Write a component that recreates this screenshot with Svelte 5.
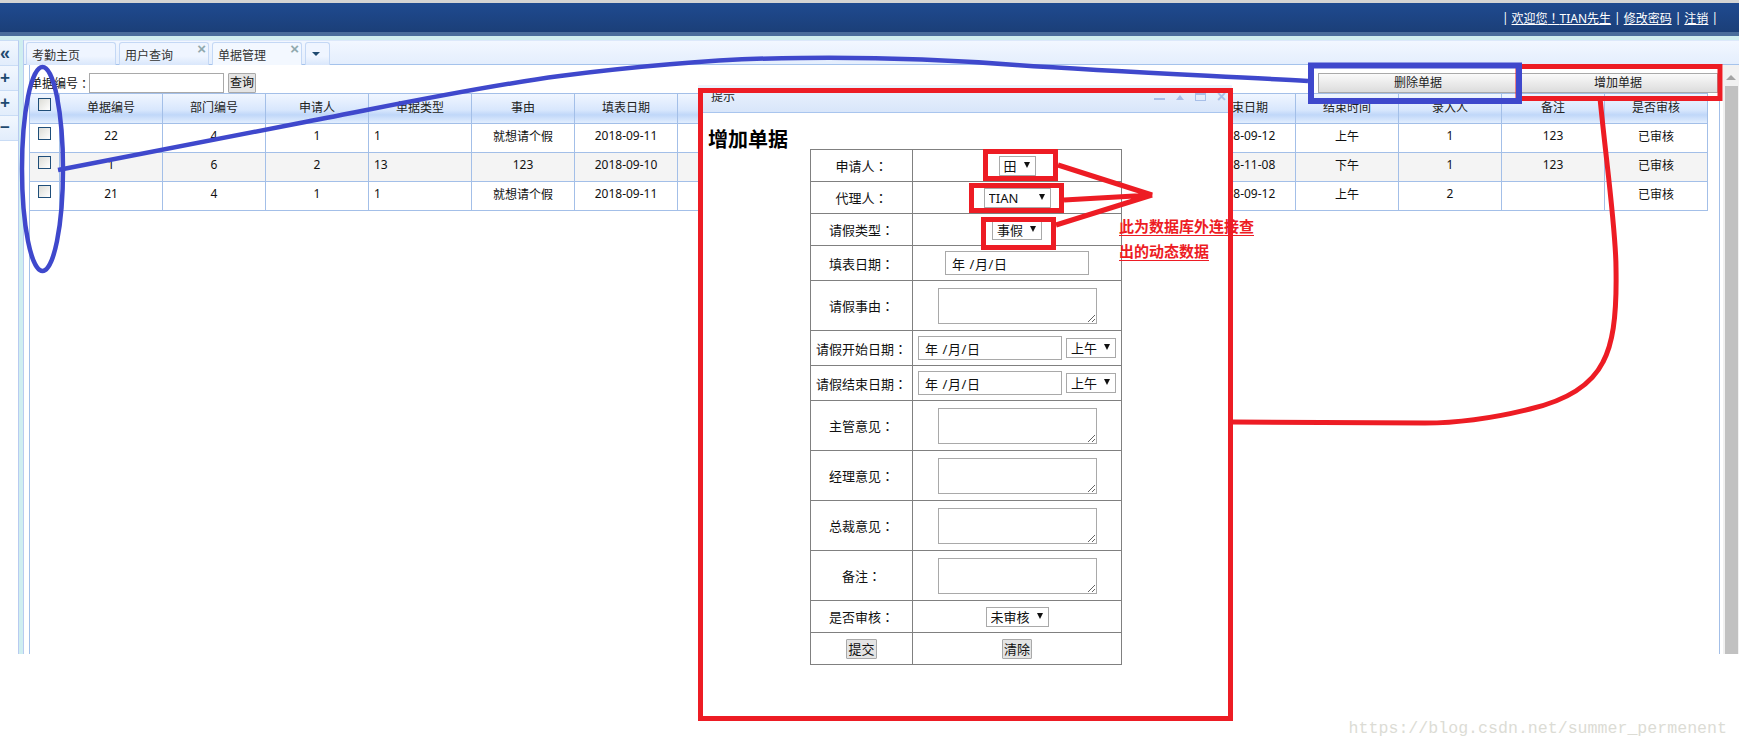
<script>
    // hidden columns sit behind the dialog, so they stay blank
    const columns = ['单据编号', '部门编号', '申请人', '单据类型', '事由', '填表日期', '', '', '', '', '', '结束日期', '结束时间', '录入人', '备注', '是否审核'];
    const rows = [
        ['22', '4', '1', '1', '就想请个假', '2018-09-11', '', '', '', '', '', '2018-09-12', '上午', '1', '123', '已审核'],
        ['1', '6', '2', '13', '123', '2018-09-10', '', '', '', '', '', '2018-11-08', '下午', '1', '123', '已审核'],
        ['21', '4', '1', '1', '就想请个假', '2018-09-11', '', '', '', '', '', '2018-09-12', '上午', '2', '', '已审核']
    ];
    const tabs = [
        { name: '考勤主页', close: false },
        { name: '用户查询', close: true },
        { name: '单据管理', close: true, active: true }
    ];
    const opinions = ['主管意见', '经理意见', '总裁意见', '备注'];
</script>

<div class="page">
    <header class="top">
        <span>|</span><a href="#a">欢迎您<span class="colon">！</span>TIAN先生</a><span>|</span><a href="#b">修改密码</a><span>|</span><a href="#c">注销</a><span>|</span>
    </header>

    <div class="main">
        <aside class="side">
            <button class="side-btn chev">«</button>
            <button class="side-btn">+</button>
            <button class="side-btn">+</button>
            <button class="side-btn">−</button>
        </aside>

        <div class="center">
            <div class="tabs">
                {#each tabs as tab}
                    <div class="tab" class:active={tab.active}>
                        {tab.name}
                        {#if tab.close}<span class="tab-x">×</span>{/if}
                    </div>
                {/each}
                <div class="tab tab-more"><i class="tab-arrow"></i></div>
            </div>

            <div class="body">
                <div class="panel">
                    <div class="toolbar">
                        <label class="search">单据编号<span class="colon">：</span><input type="text" /></label>
                        <button class="plain">查询</button>
                        <div class="actions">
                            <button class="wide">删除单据</button>
                            <button class="wide">增加单据</button>
                        </div>
                    </div>
                    <table class="grid">
                        <colgroup>
                            <col style="width:30px" />
                            {#each columns as _}<col style="width:103px" />{/each}
                        </colgroup>
                        <thead>
                            <tr>
                                <th class="box"><input type="checkbox" class="check" /></th>
                                {#each columns as c}<th>{c}</th>{/each}
                            </tr>
                        </thead>
                        <tbody>
                            {#each rows as row, i}
                                <tr class:alt={i === 1}>
                                    <td class="box"><input type="checkbox" class="check" /></td>
                                    {#each row as v, j}
                                        <td class:left={j === 3}>{v}</td>
                                    {/each}
                                </tr>
                            {/each}
                        </tbody>
                    </table>
                </div>
                <div class="scrollbar">
                    <i class="scroll-up"></i>
                    <div class="thumb"></div>
                </div>
            </div>
        </div>
    </div>

    <footer class="foot">https://blog.csdn.net/summer_permenent</footer>

    <section class="dialog">
        <div class="dialog-title">
            <span>提示</span>
            <div class="win-icons">
                <i class="win-min"></i>
                <i class="win-up"></i>
                <i class="win-max"></i>
                <i class="win-x">×</i>
            </div>
        </div>
        <h2>增加单据</h2>
        <table class="form">
            <tbody>
                <tr class="r32">
                    <td class="lab">申请人<span class="colon">：</span></td>
                    <td><span class="sel" style="width:37px"><select><option>田</option></select></span></td>
                </tr>
                <tr class="r32">
                    <td class="lab">代理人<span class="colon">：</span></td>
                    <td><span class="sel" style="width:67px"><select><option>TIAN</option></select></span></td>
                </tr>
                <tr class="r32">
                    <td class="lab">请假类型<span class="colon">：</span></td>
                    <td><span class="sel" style="width:50px"><select><option>事假</option></select></span></td>
                </tr>
                <tr class="r35">
                    <td class="lab">填表日期<span class="colon">：</span></td>
                    <td><input class="date" type="text" value="年 /月/日" /></td>
                </tr>
                <tr class="r50">
                    <td class="lab">请假事由<span class="colon">：</span></td>
                    <td><textarea></textarea></td>
                </tr>
                <tr class="r35">
                    <td class="lab">请假开始日期<span class="colon">：</span></td>
                    <td class="pair"><input class="date" type="text" value="年 /月/日" /><span class="sel" style="width:50px"><select><option>上午</option></select></span></td>
                </tr>
                <tr class="r35">
                    <td class="lab">请假结束日期<span class="colon">：</span></td>
                    <td class="pair"><input class="date" type="text" value="年 /月/日" /><span class="sel" style="width:50px"><select><option>上午</option></select></span></td>
                </tr>
                {#each opinions as o}
                    <tr class="r50">
                        <td class="lab">{o}<span class="colon">：</span></td>
                        <td><textarea></textarea></td>
                    </tr>
                {/each}
                <tr class="r32">
                    <td class="lab">是否审核<span class="colon">：</span></td>
                    <td><span class="sel" style="width:63px"><select><option>未审核</option></select></span></td>
                </tr>
                <tr class="r32">
                    <td><button class="plain">提交</button></td>
                    <td><button class="plain">清除</button></td>
                </tr>
            </tbody>
        </table>
    </section>

    <!-- hand drawn marks on top of the screenshot -->
    <svg class="marks" width="1739" height="747" viewBox="0 0 1739 747" fill="none">
        <path d="M58 170 L300 123 C370 110 470 88 560 76 C640 66 730 58 801 58 C885 57 950 60 1016 65 C1120 72 1220 76 1308 81" stroke="#3f48cc" stroke-width="4.5" />
        <ellipse cx="42.5" cy="169" rx="20.5" ry="102" stroke="#3f48cc" stroke-width="4.5" />
        <rect x="700.5" y="90.5" width="530" height="628" stroke="#ed1c24" stroke-width="5" />
        <rect x="1518" y="66.5" width="202" height="32" stroke="#ed1c24" stroke-width="5" />
        <rect x="1311" y="65.5" width="208" height="35.5" stroke="#3f48cc" stroke-width="6" />
        <rect x="985.5" y="151.5" width="70" height="27" stroke="#ed1c24" stroke-width="5" />
        <rect x="971.5" y="185.5" width="90" height="25" stroke="#ed1c24" stroke-width="5" />
        <rect x="983.5" y="219.5" width="70" height="28" stroke="#ed1c24" stroke-width="5" />
        <path d="M1058 165 L1152 195 L1064 200 M1152 195 L1056 225" stroke="#ed1c24" stroke-width="5" />
        <path d="M1600 98 C1606 160 1616 230 1616 268 C1617 320 1612 345 1603 362 C1590 388 1560 402 1530 409 C1490 419 1460 423 1425 423 L1233 422" stroke="#ed1c24" stroke-width="5" />
    </svg>

    <div class="note">
        <p>此为数据库外连接查</p>
        <p>出的动态数据</p>
    </div>
</div>

<style>
    :global(body) {
        margin: 0;
        background: #fff;
    }

    .page {
        position: relative;
        display: flex;
        flex-direction: column;
        width: 1739px;
        height: 747px;
        overflow: hidden;
        background: #fff;
        font-family: "Noto Sans", "Noto Sans CJK SC", sans-serif;
        font-size: 12px;
        color: #111;
    }

    /* fullwidth marks sit centred in the reference */
    .colon {
        font-family: "Noto Sans CJK TC", sans-serif;
    }

    /* top bar */
    .top {
        box-sizing: border-box;
        display: flex;
        justify-content: flex-end;
        align-items: center;
        gap: 3px;
        height: 36px;
        padding: 0 21px 0 0;
        border-top: 3px solid #d4d4d4;
        border-bottom: 4px solid #4a6d9c;
        background: linear-gradient(#1f4a90, #1b3f78);
        color: #fff;
    }

    .top a {
        color: #fff;
    }

    .main {
        display: flex;
        height: 618px;
        padding-top: 4px;
        box-sizing: border-box;
        background: #cfeef0;
    }

    .side {
        box-sizing: border-box;
        width: 19px;
        margin-right: 4px;
        background: #fff;
        border-right: 1px solid #b8cbf0;
        border-top: 1px solid #c9dcf5;
    }

    .side-btn {
        display: block;
        box-sizing: border-box;
        width: 100%;
        height: 25px;
        padding: 0 0 0 0;
        border: 0;
        border-bottom: 1px solid #c9dcf5;
        background: linear-gradient(#f2f7fe, #e2edfc);
        font-family: "Liberation Sans", sans-serif;
        font-size: 17px;
        font-weight: bold;
        line-height: 20px;
        text-align: left;
        color: #1f4a70;
    }

    .chev {
        font-size: 18px;
    }

    .center {
        flex: 1;
        display: flex;
        flex-direction: column;
        min-width: 0;
        background: #fff;
        border-left: 1px solid #b8cbf0;
    }

    /* tabs */
    .tabs {
        box-sizing: border-box;
        display: flex;
        gap: 3px;
        height: 25px;
        padding: 1px 0 0 2px;
        border-top: 1px solid #dce8fa;
        border-bottom: 1px solid #a5c3ec;
        background: linear-gradient(#f2f7ff, #e4eefd);
    }

    .tab {
        position: relative;
        box-sizing: border-box;
        width: 90px;
        height: 23px;
        padding: 4px 0 0 5px;
        border: 1px solid #c4d8f5;
        border-bottom: 0;
        border-radius: 3px 3px 0 0;
        background: linear-gradient(#eff5ff 60%, #d9e7fb);
        line-height: 17px;
        color: #333;
    }

    .tab.active {
        background: #f3f8ff;
    }

    .tab-x {
        position: absolute;
        top: 0;
        right: 2px;
        font-family: "Liberation Sans", sans-serif;
        font-size: 15px;
        font-weight: bold;
        line-height: 12px;
        color: #8fa9ae;
    }

    .tab-more {
        width: 25px;
    }

    .tab-arrow {
        position: absolute;
        left: 6px;
        top: 9px;
        border: 4px solid transparent;
        border-top: 4px solid #1f4a70;
        border-left-width: 4px;
        border-right-width: 4px;
    }

    .body {
        flex: 1;
        display: flex;
        min-height: 0;
        padding-left: 5px;
    }

    .panel {
        box-sizing: border-box;
        width: 1691px;
        border-left: 1px solid #a3bfe8;
        border-right: 1px solid #a3bfe8;
    }

    .toolbar {
        box-sizing: border-box;
        display: flex;
        align-items: center;
        gap: 4px;
        height: 28px;
        padding-top: 8px;
    }

    .search {
        display: flex;
        align-items: center;
    }

    .search input {
        box-sizing: border-box;
        width: 135px;
        height: 20px;
        margin: 0 0 0 -1px;
        border: 1px solid #a9a9a9;
    }

    .plain {
        box-sizing: border-box;
        height: 20px;
        padding: 0 1px;
        border: 1px solid #a9a9a9;
        border-radius: 1px;
        background: #e4e4e4;
        font: inherit;
        line-height: 16px;
        color: #111;
    }

    .actions {
        display: flex;
        margin-left: auto;
        margin-right: 1px;
    }

    .wide {
        box-sizing: border-box;
        width: 200px;
        height: 20px;
        padding: 0;
        border: 1px solid #a9a9a9;
        background: linear-gradient(#fafafa, #dcdcdc);
        font: inherit;
        line-height: 16px;
        color: #222;
    }

    /* data grid */
    .grid {
        table-layout: fixed;
        width: 1678px;
        border-spacing: 0;
    }

    .grid th {
        box-sizing: border-box;
        height: 31px;
        padding: 0 0 3px;
        border-top: 1px solid #a3bfe8;
        border-right: 1px solid #a3bfe8;
        border-bottom: 1px solid #a3bfe8;
        background: linear-gradient(#f0f6ff 0%, #d8e7fd 55%, #c0d7f9 72%, #e2eefe 100%);
        font-weight: normal;
        color: #222;
    }

    .grid td {
        box-sizing: border-box;
        height: 29px;
        padding: 0 0 5px;
        border-right: 1px solid #a3bfe8;
        border-bottom: 1px solid #a3bfe8;
        text-align: center;
        white-space: nowrap;
        overflow: hidden;
    }

    .grid th.box {
        padding-bottom: 8px;
    }

    .grid td.box {
        padding-bottom: 9px;
    }

    .grid td.left {
        padding-left: 5px;
        text-align: left;
    }

    .grid tr.alt td {
        background: #f4f4f4;
    }

    .check {
        display: block;
        box-sizing: border-box;
        width: 13px;
        height: 13px;
        margin: 0 auto;
        appearance: none;
        border: 1px solid #1f4e79;
        background: linear-gradient(135deg, #dcdcd6, #fff);
    }

    .scrollbar {
        position: relative;
        width: 16px;
        margin-left: 3px;
        padding-top: 21px;
        background: #f1f1f1;
    }

    .scroll-up {
        position: absolute;
        left: 3px;
        top: 10px;
        border: 5px solid transparent;
        border-top: 0;
        border-bottom-color: #a3a3a3;
    }

    .thumb {
        height: 100%;
        margin: 0 1px 0 2px;
        background: #c1c1c1;
    }

    .foot {
        flex: 1;
        display: flex;
        justify-content: flex-end;
        align-items: flex-start;
        padding: 65px 12px 0 0;
        font-family: "Liberation Mono", monospace;
        font-size: 16.6px;
        line-height: 20px;
        color: #dcdcd5;
    }

    /* floating window */
    .dialog {
        position: absolute;
        left: 698px;
        top: 85px;
        box-sizing: border-box;
        width: 534px;
        height: 631px;
        background: #fff;
    }

    .dialog-title {
        position: relative;
        box-sizing: border-box;
        height: 28px;
        padding-left: 13px;
        border-bottom: 1px solid #a9c5ee;
        background: linear-gradient(#edf3fd, #d8e6fa);
        line-height: 24px;
        color: #222;
    }

    .win-icons {
        position: absolute;
        top: 8px;
        right: 6px;
        display: flex;
        align-items: center;
        gap: 11px;
        height: 8px;
    }

    .win-min {
        width: 11px;
        height: 2px;
        margin-top: 3px;
        background: #a7bfe8;
    }

    .win-up {
        border: 4px solid transparent;
        border-top: 0;
        border-bottom: 5px solid #a7bfe8;
    }

    .win-max {
        box-sizing: border-box;
        width: 11px;
        height: 8px;
        border: 1px solid #a7bfe8;
        border-top-width: 2px;
    }

    .win-x {
        font-family: "Liberation Sans", sans-serif;
        font-size: 16px;
        font-style: normal;
        font-weight: bold;
        line-height: 8px;
        color: #a7bfe8;
    }

    h2 {
        margin: 15px 0 0 10px;
        height: 21px;
        font-size: 20px;
        font-weight: bold;
        line-height: 23px;
        color: #000;
    }

    .form {
        table-layout: fixed;
        width: 312px;
        margin: 0 0 0 112px;
        border: 1px solid #333;
        border-collapse: collapse;
        font-size: 13px;
    }

    .form td {
        box-sizing: border-box;
        padding: 0;
        border: 1px solid #808080;
        text-align: center;
        vertical-align: middle;
    }

    .form td:first-child {
        width: 102px;
    }

    .form tr.r32 {
        height: 32px;
    }

    .form tr.r35 {
        height: 35px;
    }

    .form tr.r50 {
        height: 50px;
    }

    .date {
        box-sizing: border-box;
        display: inline-block;
        width: 144px;
        height: 24px;
        margin: 0;
        padding: 0 6px;
        border: 1px solid #a9a9a9;
        font: inherit;
        letter-spacing: 0.6px;
        vertical-align: middle;
        color: #111;
    }

    .pair .date {
        margin-right: 4px;
    }

    textarea {
        box-sizing: border-box;
        display: inline-block;
        width: 159px;
        height: 36px;
        margin: 0;
        border: 1px solid #a9a9a9;
        vertical-align: middle;
    }

    .sel {
        position: relative;
        display: inline-block;
        vertical-align: middle;
    }

    .sel select {
        box-sizing: border-box;
        display: block;
        width: 100%;
        height: 20px;
        padding: 0 0 0 4px;
        appearance: none;
        border: 1px solid #a9a9a9;
        background: #fff;
        font: inherit;
        color: #111;
    }

    /* select arrow */
    .sel::after {
        content: "";
        position: absolute;
        right: 6px;
        top: 6px;
        border: 3.5px solid transparent;
        border-top: 6px solid #111;
        border-bottom: 0;
    }

    .marks {
        position: absolute;
        left: 0;
        top: 0;
        pointer-events: none;
    }

    .note {
        position: absolute;
        left: 1119px;
        top: 217px;
        color: #ed1c24;
        font-size: 15px;
        font-weight: bold;
    }

    .note p {
        box-sizing: border-box;
        width: fit-content;
        height: 19px;
        margin: 0 0 6px;
        border-bottom: 1px solid #ed1c24;
        line-height: 18px;
    }
</style>
